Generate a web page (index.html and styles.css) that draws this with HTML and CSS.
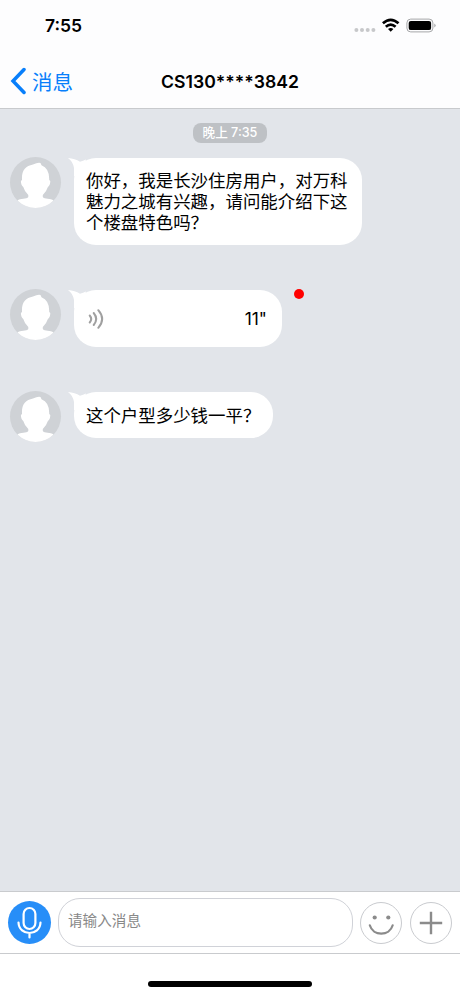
FILE: index.html
```
<!DOCTYPE html>
<html lang="zh-CN">
<head>
  <meta charset="utf-8">
  <title>CS130****3842</title>
  <meta name="viewport" content="width=device-width,initial-scale=1,viewport-fit=cover">
  <link rel="stylesheet" href="styles.css">
</head>
<body>
<svg class="sprite" width="0" height="0">
  <symbol id="avatar" viewBox="0 0 51 51">
    <path fill="#fff" d="M7.500 43.500C10 41 17 42.500 18.300 40V38Q14.500 34.500 13.300 30Q11 28.500 10.900 24L12 23C11.500 13 15.500 9 23 7.500Q28 5.200 30.500 6L31.500 8.300Q39.600 11.500 39.200 23L40.300 24Q40.200 28.500 37.900 30Q36.500 34.500 32.800 38V40C34 42.500 41 41 43.500 43.500V52H7.500Z"/>
  </symbol>
  <symbol id="tail" viewBox="0 0 20 18">
    <path fill="#fff" d="M0 0Q7 .500 12 3.800Q15 2.800 18 1.500L14 18H6V10Q5 3.500 0 0Z"/>
  </symbol>
</svg>
<div class="page">
  <div class="header">
    <div class="status">
      <span class="clock">7:55</span>
      <svg class="status-icons" width="82" height="18" viewBox="0 0 82 18">
        <g fill="#c7c8ca">
          <circle cx="2.400" cy="13" r="2"/><circle cx="8" cy="13" r="2"/><circle cx="13.700" cy="13" r="2"/><circle cx="19.400" cy="13" r="2"/>
        </g>
        <g fill="none" stroke="#000" stroke-width="2.700">
          <path d="M28.900 6.300Q36.700-.500 44.500 6.300"/>
          <path d="M31.800 9.800Q36.700 5.500 41.600 9.800"/>
        </g>
        <path d="M34 12Q36.700 9.800 39.400 12L36.700 14.800Z"/>
        <rect x="52.900" y="2.100" width="26" height="12.800" rx="3.800" fill="none" stroke="#a5a6a8"/>
        <rect x="54.700" y="3.900" width="22.400" height="9.200" rx="2.200"/>
        <path fill="#a5a6a8" d="M80.300 6.500Q83 8.500 80.300 10.500Z"/>
      </svg>
    </div>
    <div class="nav">
      <a class="back">
        <svg width="16" height="28" viewBox="0 0 16 28"><path d="M14 2.500L3 14L14 25.500" fill="none" stroke="#087ffb" stroke-width="3.500" stroke-linecap="round"/></svg>
        <span>消息</span>
      </a>
      <div class="title">CS130****3842</div>
    </div>
  </div>

  <div class="chat">
    <div class="time">晚上 7:35</div>
    <div class="msg">
      <svg class="avatar"><use href="#avatar"/></svg>
      <div class="bubble bubble-long">
        <svg class="tail"><use href="#tail"/></svg>
        你好，我是长沙住房用户，对万科<br>魅力之城有兴趣，请问能介绍下这<br>个楼盘特色吗？
      </div>
    </div>
    <div class="msg">
      <svg class="avatar"><use href="#avatar"/></svg>
      <div class="bubble voice">
        <svg class="tail"><use href="#tail"/></svg>
        <svg width="18" height="22" viewBox="0 0 18 22" fill="none" stroke="#a0a0a0" stroke-width="2" stroke-linecap="round">
          <path d="M3.700 7.500Q6.700 11 3.700 14.500"/>
          <path d="M7.700 5Q12.700 11 7.700 17"/>
          <path d="M12.300 2.200Q20 11 12.300 19.800"/>
        </svg>
        <span>11"</span>
      </div>
      <i class="unread"></i>
    </div>
    <div class="msg">
      <svg class="avatar"><use href="#avatar"/></svg>
      <div class="bubble bubble-line">
        <svg class="tail"><use href="#tail"/></svg>
        这个户型多少钱一平？
      </div>
    </div>
  </div>

  <div class="toolbar">
    <div class="mic">
      <svg width="43" height="43" viewBox="0 0 43 43" fill="none" stroke="#fff" stroke-width="2.200" stroke-linecap="round">
        <rect x="15.600" y="7" width="11.800" height="21" rx="5.900"/>
        <path d="M10.500 21.500C11 35.500 32 35.500 32.500 21.500M21.500 32V36.500"/>
      </svg>
    </div>
    <div class="input">请输入消息</div>
    <div class="round">
      <svg width="40" height="40" viewBox="0 0 40 40" fill="none" stroke="#8b8b8b" stroke-width="2.200" stroke-linecap="round">
        <path d="M8.800 22.300C12 33.300 28.500 33.300 31.700 22.300"/>
        <circle cx="13.700" cy="14.500" r="2.100" fill="#8b8b8b" stroke="none"/>
        <circle cx="27.300" cy="14.500" r="2.100" fill="#8b8b8b" stroke="none"/>
      </svg>
    </div>
    <div class="round">
      <svg width="40" height="40" viewBox="0 0 40 40"><path d="M8.800 20H31.200M20 8.800V31.200" stroke="#8b8b8b" stroke-width="2.400"/></svg>
    </div>
  </div>
  <div class="home"><i></i></div>
</div>
</body>
</html>
```
FILE: styles.css
```
* {
  margin: 0;
  padding: 0;
  box-sizing: border-box;
}

body {
  font-family: Inter, "Noto Sans CJK SC", sans-serif;
  color: #000;
  background: #fff;
}

svg {
  display: block;
  flex: none;
}

.sprite {
  position: absolute;
}

.page {
  display: flex;
  flex-direction: column;
  height: 996px;
  overflow: hidden;
}

.header {
  height: 109px;
  background: #fdfdfe;
  border-bottom: 1px solid #c8cacd;
}

.status {
  display: flex;
  justify-content: space-between;
  align-items: center;
  height: 54px;
  padding: 0 24px 3px 45px;
}

.clock {
  font-size: 17.500px;
  font-weight: 600;
}

.nav {
  display: grid;
  grid-template-columns: 1fr auto 1fr;
  align-items: center;
  height: 54px;
  padding: 0 10px;
}

.back {
  display: flex;
  align-items: center;
  gap: 6px;
  color: #087ffb;
  font-size: 20.500px;
  line-height: 28px;
}

.back span {
  padding-top: 3px;
}

.title {
  font-size: 17.600px;
  font-weight: 600;
}

.chat {
  display: flex;
  flex-direction: column;
  flex: 1;
  padding: 14px 10px 0;
  background: #e2e5ea;
}

.time {
  align-self: center;
  width: 74px;
  height: 20px;
  margin-bottom: 14px;
  border-radius: 8px;
  background: #bec1c5;
  color: #fff;
  font-size: 12.600px;
  font-weight: 500;
  line-height: 20px;
  text-align: center;
  white-space: nowrap;
}

.msg {
  display: flex;
  align-items: flex-start;
  margin-bottom: 44px;
}

.avatar {
  width: 51px;
  height: 51px;
  margin-right: 13px;
  border-radius: 50%;
  background: #cfd2d6;
}

.bubble {
  position: relative;
  margin-top: 1px;
  padding: 12px;
  border-radius: 22px;
  background: #fff;
  font-size: 17.450px;
  line-height: 21px;
  white-space: nowrap;
}

.bubble-long {
  width: 288px;
}

.bubble-line {
  padding: 13px 13px 12px 12px;
}

/* little hook next to the avatar */
.tail {
  position: absolute;
  top: 0;
  left: -6px;
  width: 20px;
  height: 18px;
}

.voice {
  display: flex;
  justify-content: space-between;
  align-items: center;
  width: 208px;
  height: 57px;
  padding-right: 15px;
}

.unread {
  width: 10px;
  height: 10px;
  margin-left: 12px;
  border-radius: 50%;
  background: #f00;
}

.toolbar {
  display: flex;
  align-items: center;
  height: 63px;
  padding: 0 8px;
  border-top: 1px solid #c9cbce;
  border-bottom: 1px solid #c9cbce;
  background: #fff;
}

.mic {
  width: 43px;
  height: 43px;
  border-radius: 50%;
  background: #278ef8;
}

.input {
  flex: 1;
  height: 49px;
  margin: 0 7px;
  padding-left: 9px;
  border: 1px solid #d0d2d8;
  border-radius: 22px;
  color: #888;
  font-size: 14.600px;
  line-height: 44px;
}

.round {
  width: 42px;
  height: 42px;
  border: 1px solid #c9cbcf;
  border-radius: 50%;
}

.round + .round {
  margin-left: 8px;
}

.home {
  display: flex;
  justify-content: center;
  height: 42px;
  padding-top: 27px;
}

.home i {
  width: 164px;
  height: 6px;
  border-radius: 3px;
  background: #000;
}
```
